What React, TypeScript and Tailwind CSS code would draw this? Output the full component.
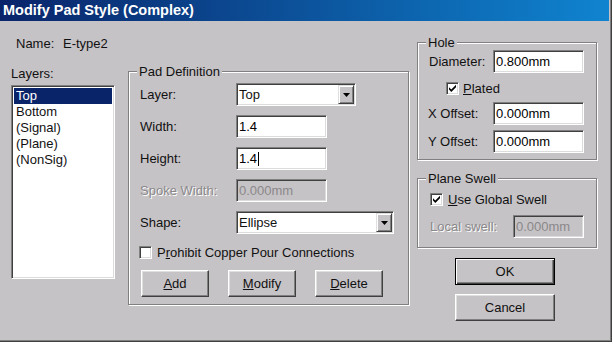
import React from "react";

const BG = "bg-[#c6c3c6]";
const font = { fontFamily: '"Liberation Sans", Arial, sans-serif' };

const fieldCls =
  "h-[23px] flex items-center pl-[2px] border border-t-[#808080] border-l-[#808080] border-r-white border-b-white shadow-[inset_1px_1px_0_#404040,inset_-1px_-1px_0_#dcdcdc]";

function Field({ w, value, disabled, caret }: { w: string; value: string; disabled?: boolean; caret?: boolean }) {
  return (
    <div className={`${fieldCls} ${w} ${disabled ? "bg-[#c6c3c6] text-[#8a888a]" : "bg-white text-black"}`}>
      <span className="leading-[15px] whitespace-nowrap">{value}</span>
      {caret && <span className="ml-[1px] w-[1px] h-[14px] bg-black" />}
    </div>
  );
}

function ArrowBtn() {
  return (
    <div className={`h-[19px] w-[16px] ${BG} flex items-center justify-center border border-t-[#dfdfdf] border-l-[#dfdfdf] border-r-[#404040] border-b-[#404040] shadow-[inset_1px_1px_0_#fff,inset_-1px_-1px_0_#808080]`}>
      <svg width="7" height="4" viewBox="0 0 7 4">
        <path d="M0 0H7L3.5 4Z" fill="#000" />
      </svg>
    </div>
  );
}

function Combo({ w, value }: { w: string; value: string }) {
  return (
    <div className={`${fieldCls} ${w} bg-white justify-between pr-[1px]`}>
      <span className="leading-[15px]">{value}</span>
      <ArrowBtn />
    </div>
  );
}

function Check({ checked }: { checked?: boolean }) {
  return (
    <div className="w-[13px] h-[13px] bg-white flex items-center justify-center border border-t-[#808080] border-l-[#808080] border-r-white border-b-white shadow-[inset_1px_1px_0_#404040,inset_-1px_-1px_0_#dcdcdc]">
      {checked && (
        <svg width="9" height="9" viewBox="0 0 9 9">
          <path d="M1 3.2L3.3 5.5L8 0.8V3.2L3.3 7.9L1 5.6Z" fill="#000" />
        </svg>
      )}
    </div>
  );
}

function Btn({ w, children, def }: { w: string; children: React.ReactNode; def?: boolean }) {
  return (
    <div
      className={`h-[27px] ${w} ${BG} flex items-center justify-center leading-[15px] border ${
        def
          ? "border-black shadow-[inset_1px_1px_0_#fff,inset_-1px_-1px_0_#404040,inset_-2px_-2px_0_#808080]"
          : "border-t-white border-l-white border-r-[#404040] border-b-[#404040] shadow-[inset_-1px_-1px_0_#808080,inset_1px_1px_0_#dfdfdf]"
      }`}
    >
      {children}
    </div>
  );
}

function Group({ label, className, children }: { label: string; className: string; children: React.ReactNode }) {
  return (
    <div className={`relative border border-[#808080] shadow-[inset_1px_1px_0_#fff,1px_1px_0_#fff] ${className}`}>
      <span className={`absolute -top-[8px] left-[8px] px-[2px] ${BG} leading-[15px] whitespace-nowrap`}>{label}</span>
      {children}
    </div>
  );
}

const disabledText = "text-[#8a888a] [text-shadow:1px_1px_0_#fff]";

export default function App() {
  return (
    <div className="w-[613px] h-[344px] bg-white text-[13px] text-[#111]" style={font}>
      <div className={`w-[612px] h-[342px] ${BG} flex flex-col border-r border-b border-[#404040] shadow-[inset_-1px_-1px_0_#808080]`}>
        {/* title bar */}
        <div className="h-[21px] mr-[2px] flex items-center pl-[3px] bg-gradient-to-r from-[#0a246a] to-[#1084d0]">
          <span className="text-white font-bold text-[14.5px] leading-[17px]">Modify Pad Style (Complex)</span>
        </div>
        {/* body */}
        <div className="flex">
          {/* left column */}
          <div className="pl-[11px] flex flex-col">
            <div className="mt-[15px] ml-[5px] flex leading-[15px]">
              <span className="w-[47px]">Name:</span>
              <span>E-type2</span>
            </div>
            <div className="mt-[15px] flex">
              <div className="w-[104px] flex flex-col">
                <span className="leading-[15px]">Layers:</span>
                <div className="mt-[4px] h-[194px] bg-white border border-t-[#808080] border-l-[#808080] border-r-white border-b-white shadow-[inset_1px_1px_0_#404040,inset_-1px_-1px_0_#dcdcdc] p-[2px] flex flex-col">
                  <div className="h-[16px] bg-[#0a246a] text-white pl-[2px] leading-[16px]">Top</div>
                  <div className="h-[16px] pl-[2px] leading-[16px]">Bottom</div>
                  <div className="h-[16px] pl-[2px] leading-[16px]">(Signal)</div>
                  <div className="h-[16px] pl-[2px] leading-[16px]">(Plane)</div>
                  <div className="h-[16px] pl-[2px] leading-[16px]">(NonSig)</div>
                </div>
              </div>
              <Group label="Pad Definition" className="ml-[13px] mt-[5px] w-[281px] pt-[11px] pb-[7px]">
                <div className="flex flex-col gap-[9px] pl-[11px]">
                  <div className="flex items-center">
                    <span className="w-[96px] leading-[15px]">Layer:</span>
                    <Combo w="w-[120px]" value="Top" />
                  </div>
                  <div className="flex items-center">
                    <span className="w-[96px] leading-[15px]">Width:</span>
                    <Field w="w-[91px]" value="1.4" />
                  </div>
                  <div className="flex items-center">
                    <span className="w-[96px] leading-[15px]">Height:</span>
                    <Field w="w-[91px]" value="1.4" caret />
                  </div>
                  <div className="flex items-center">
                    <span className={`w-[96px] leading-[15px] ${disabledText}`}>Spoke Width:</span>
                    <Field w="w-[91px]" value="0.000mm" disabled />
                  </div>
                  <div className="flex items-center">
                    <span className="w-[96px] leading-[15px]">Shape:</span>
                    <Combo w="w-[158px]" value="Ellipse" />
                  </div>
                </div>
                <div className="mt-[11px] pl-[10px] flex items-center h-[15px]">
                  <Check />
                  <span className="ml-[5px] leading-[15px]">
                    P<u>r</u>ohibit Copper Pour Connections
                  </span>
                </div>
                <div className="mt-[10px] pl-[12px] flex gap-[19px]">
                  <Btn w="w-[68px]">
                    <u>A</u>dd
                  </Btn>
                  <Btn w="w-[68px]">
                    <u>M</u>odify
                  </Btn>
                  <Btn w="w-[68px]">
                    <u>D</u>elete
                  </Btn>
                </div>
              </Group>
            </div>
          </div>
          {/* right column */}
          <div className="ml-[8px] flex flex-col">
            <Group label="Hole" className="mt-[21px] w-[180px] pt-[7px] pb-[6px]">
              <div className="flex items-center pl-[11px]">
                <span className="w-[64px] leading-[15px]">Diameter:</span>
                <Field w="w-[91px]" value="0.800mm" />
              </div>
              <div className="mt-[8px] pl-[28px] flex items-center h-[15px]">
                <Check checked />
                <span className="ml-[4px] leading-[15px]">
                  <u>P</u>lated
                </span>
              </div>
              <div className="mt-[6px] flex items-center pl-[10px]">
                <span className="w-[65px] leading-[15px]">X Offset:</span>
                <Field w="w-[91px]" value="0.000mm" />
              </div>
              <div className="mt-[5px] flex items-center pl-[10px]">
                <span className="w-[65px] leading-[15px]">Y Offset:</span>
                <Field w="w-[91px]" value="0.000mm" />
              </div>
            </Group>
            <Group label="Plane Swell" className="mt-[18px] w-[180px] pt-[13px] pb-[9px]">
              <div className="pl-[12px] flex items-center h-[15px]">
                <Check checked />
                <span className="ml-[5px] leading-[15px]">
                  <u>U</u>se Global Swell
                </span>
              </div>
              <div className="mt-[8px] flex items-center pl-[12px]">
                <span className={`w-[83px] leading-[15px] ${disabledText}`}>Local swell:</span>
                <Field w="w-[71px]" value="0.000mm" disabled />
              </div>
            </Group>
            <div className="ml-[38px] mt-[10px]">
              <Btn w="w-[100px]" def>
                OK
              </Btn>
            </div>
            <div className="ml-[38px] mt-[9px]">
              <Btn w="w-[100px]">Cancel</Btn>
            </div>
          </div>
        </div>
      </div>
    </div>
  );
}
